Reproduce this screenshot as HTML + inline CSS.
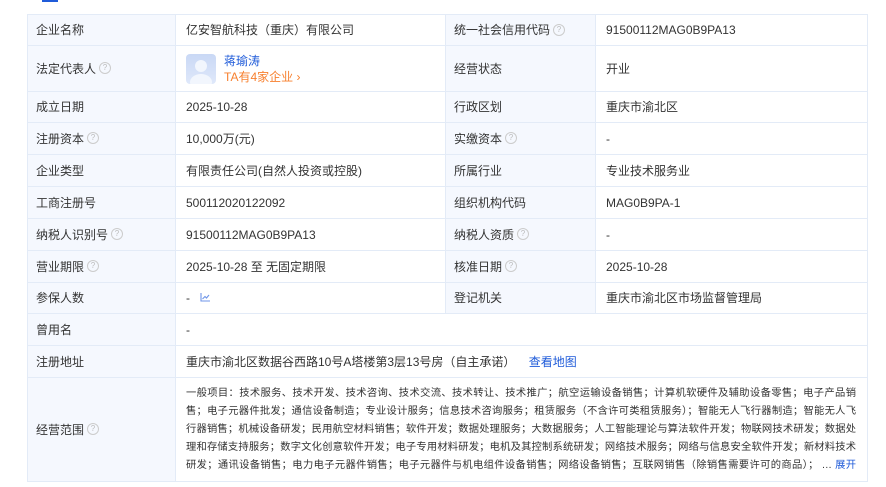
<!DOCTYPE html>
<html><head><meta charset="utf-8"><style>
body{margin:0;width:886px;height:487px;background:#fff;overflow:hidden;font-family:"Liberation Sans","Noto Sans CJK SC",sans-serif;font-size:12px;color:#333;position:relative}
.tab{position:absolute;left:42px;top:0;width:16px;height:2px;background:#1f5bd9}
table{position:absolute;left:27px;top:14px;border-collapse:collapse;table-layout:fixed;width:840px}
td{border:1px solid #e3ebf7;padding:0 0 0 8px;vertical-align:middle;line-height:16px;box-sizing:border-box}
td.l{background:#f5f8fe}
td.v{padding-left:10px}
.q{display:inline-block;width:10px;height:10px;border:1px solid #ccc;border-radius:50%;font-size:8px;line-height:10px;text-align:center;color:#bbb;vertical-align:middle;margin-left:3px;margin-top:-2px}
.blue{color:#1f5bd9}
.scope{font-size:10.3px;line-height:18px;color:#333;padding-right:11px}
.scope div{white-space:nowrap;overflow:hidden;text-align:justify;text-align-last:justify;text-justify:inter-character}
</style></head><body>
<div class="tab"></div>
<table>
<colgroup><col style="width:148px"><col style="width:270px"><col style="width:150px"><col style="width:272px"></colgroup>
<tr style="height:31px"><td class="l">企业名称</td><td class="v">亿安智航科技（重庆）有限公司</td><td class="l">统一社会信用代码<span class="q">?</span></td><td class="v">91500112MAG0B9PA13</td></tr>
<tr style="height:46px"><td class="l">法定代表人<span class="q">?</span></td><td class="v"><div style="display:flex;align-items:center"><div style="width:30px;height:30px;border-radius:4px;background:linear-gradient(#c9d8f5,#dfe8fa);position:relative;overflow:hidden;margin-right:8px"><div style="position:absolute;left:9px;top:6px;width:12px;height:12px;border-radius:50%;background:#f2f6fd"></div><div style="position:absolute;left:4px;top:20px;width:22px;height:16px;border-radius:50%;background:#f2f6fd"></div></div><div><div class="blue">蒋瑜涛</div><div style="color:#f7802f">TA有4家企业 ›</div></div></div></td><td class="l">经营状态</td><td class="v">开业</td></tr>
<tr style="height:31px"><td class="l">成立日期</td><td class="v">2025-10-28</td><td class="l">行政区划</td><td class="v">重庆市渝北区</td></tr>
<tr style="height:32px"><td class="l">注册资本<span class="q">?</span></td><td class="v">10,000万(元)</td><td class="l">实缴资本<span class="q">?</span></td><td class="v">-</td></tr>
<tr style="height:32px"><td class="l">企业类型</td><td class="v">有限责任公司(自然人投资或控股)</td><td class="l">所属行业</td><td class="v">专业技术服务业</td></tr>
<tr style="height:32px"><td class="l">工商注册号</td><td class="v">500112020122092</td><td class="l">组织机构代码</td><td class="v">MAG0B9PA-1</td></tr>
<tr style="height:32px"><td class="l">纳税人识别号<span class="q">?</span></td><td class="v">91500112MAG0B9PA13</td><td class="l">纳税人资质<span class="q">?</span></td><td class="v">-</td></tr>
<tr style="height:32px"><td class="l">营业期限<span class="q">?</span></td><td class="v">2025-10-28 至 无固定期限</td><td class="l">核准日期<span class="q">?</span></td><td class="v">2025-10-28</td></tr>
<tr style="height:31px"><td class="l">参保人数</td><td class="v">- &nbsp;&nbsp;<svg width="10" height="9" viewBox="0 0 10 9" style="vertical-align:0"><path d="M1 0V8H10M2.5 6L5 3.5L6.5 5L9 2" fill="none" stroke="#6f95e8" stroke-width="1.1"/></svg></td><td class="l">登记机关</td><td class="v">重庆市渝北区市场监督管理局</td></tr>
<tr style="height:32px"><td class="l">曾用名</td><td class="v" colspan="3">-</td></tr>
<tr style="height:32px"><td class="l">注册地址</td><td class="v" colspan="3">重庆市渝北区数据谷西路10号A塔楼第3层13号房（自主承诺） &nbsp;&nbsp;&nbsp;<span class="blue">查看地图</span></td></tr>
<tr style="height:104px"><td class="l">经营范围<span class="q">?</span></td><td class="v scope" colspan="3">
<div>一般项目：技术服务、技术开发、技术咨询、技术交流、技术转让、技术推广；航空运输设备销售；计算机软硬件及辅助设备零售；电子产品销</div>
<div>售；电子元器件批发；通信设备制造；专业设计服务；信息技术咨询服务；租赁服务（不含许可类租赁服务）；智能无人飞行器制造；智能无人飞</div>
<div>行器销售；机械设备研发；民用航空材料销售；软件开发；数据处理服务；大数据服务；人工智能理论与算法软件开发；物联网技术研发；数据处</div>
<div>理和存储支持服务；数字文化创意软件开发；电子专用材料研发；电机及其控制系统研发；网络技术服务；网络与信息安全软件开发；新材料技术</div>
<div>研发；通讯设备销售；电力电子元器件销售；电子元器件与机电组件设备销售；网络设备销售；互联网销售（除销售需要许可的商品）； … <span class="blue">展开</span></div>
</td></tr>
</table>
</body></html>
